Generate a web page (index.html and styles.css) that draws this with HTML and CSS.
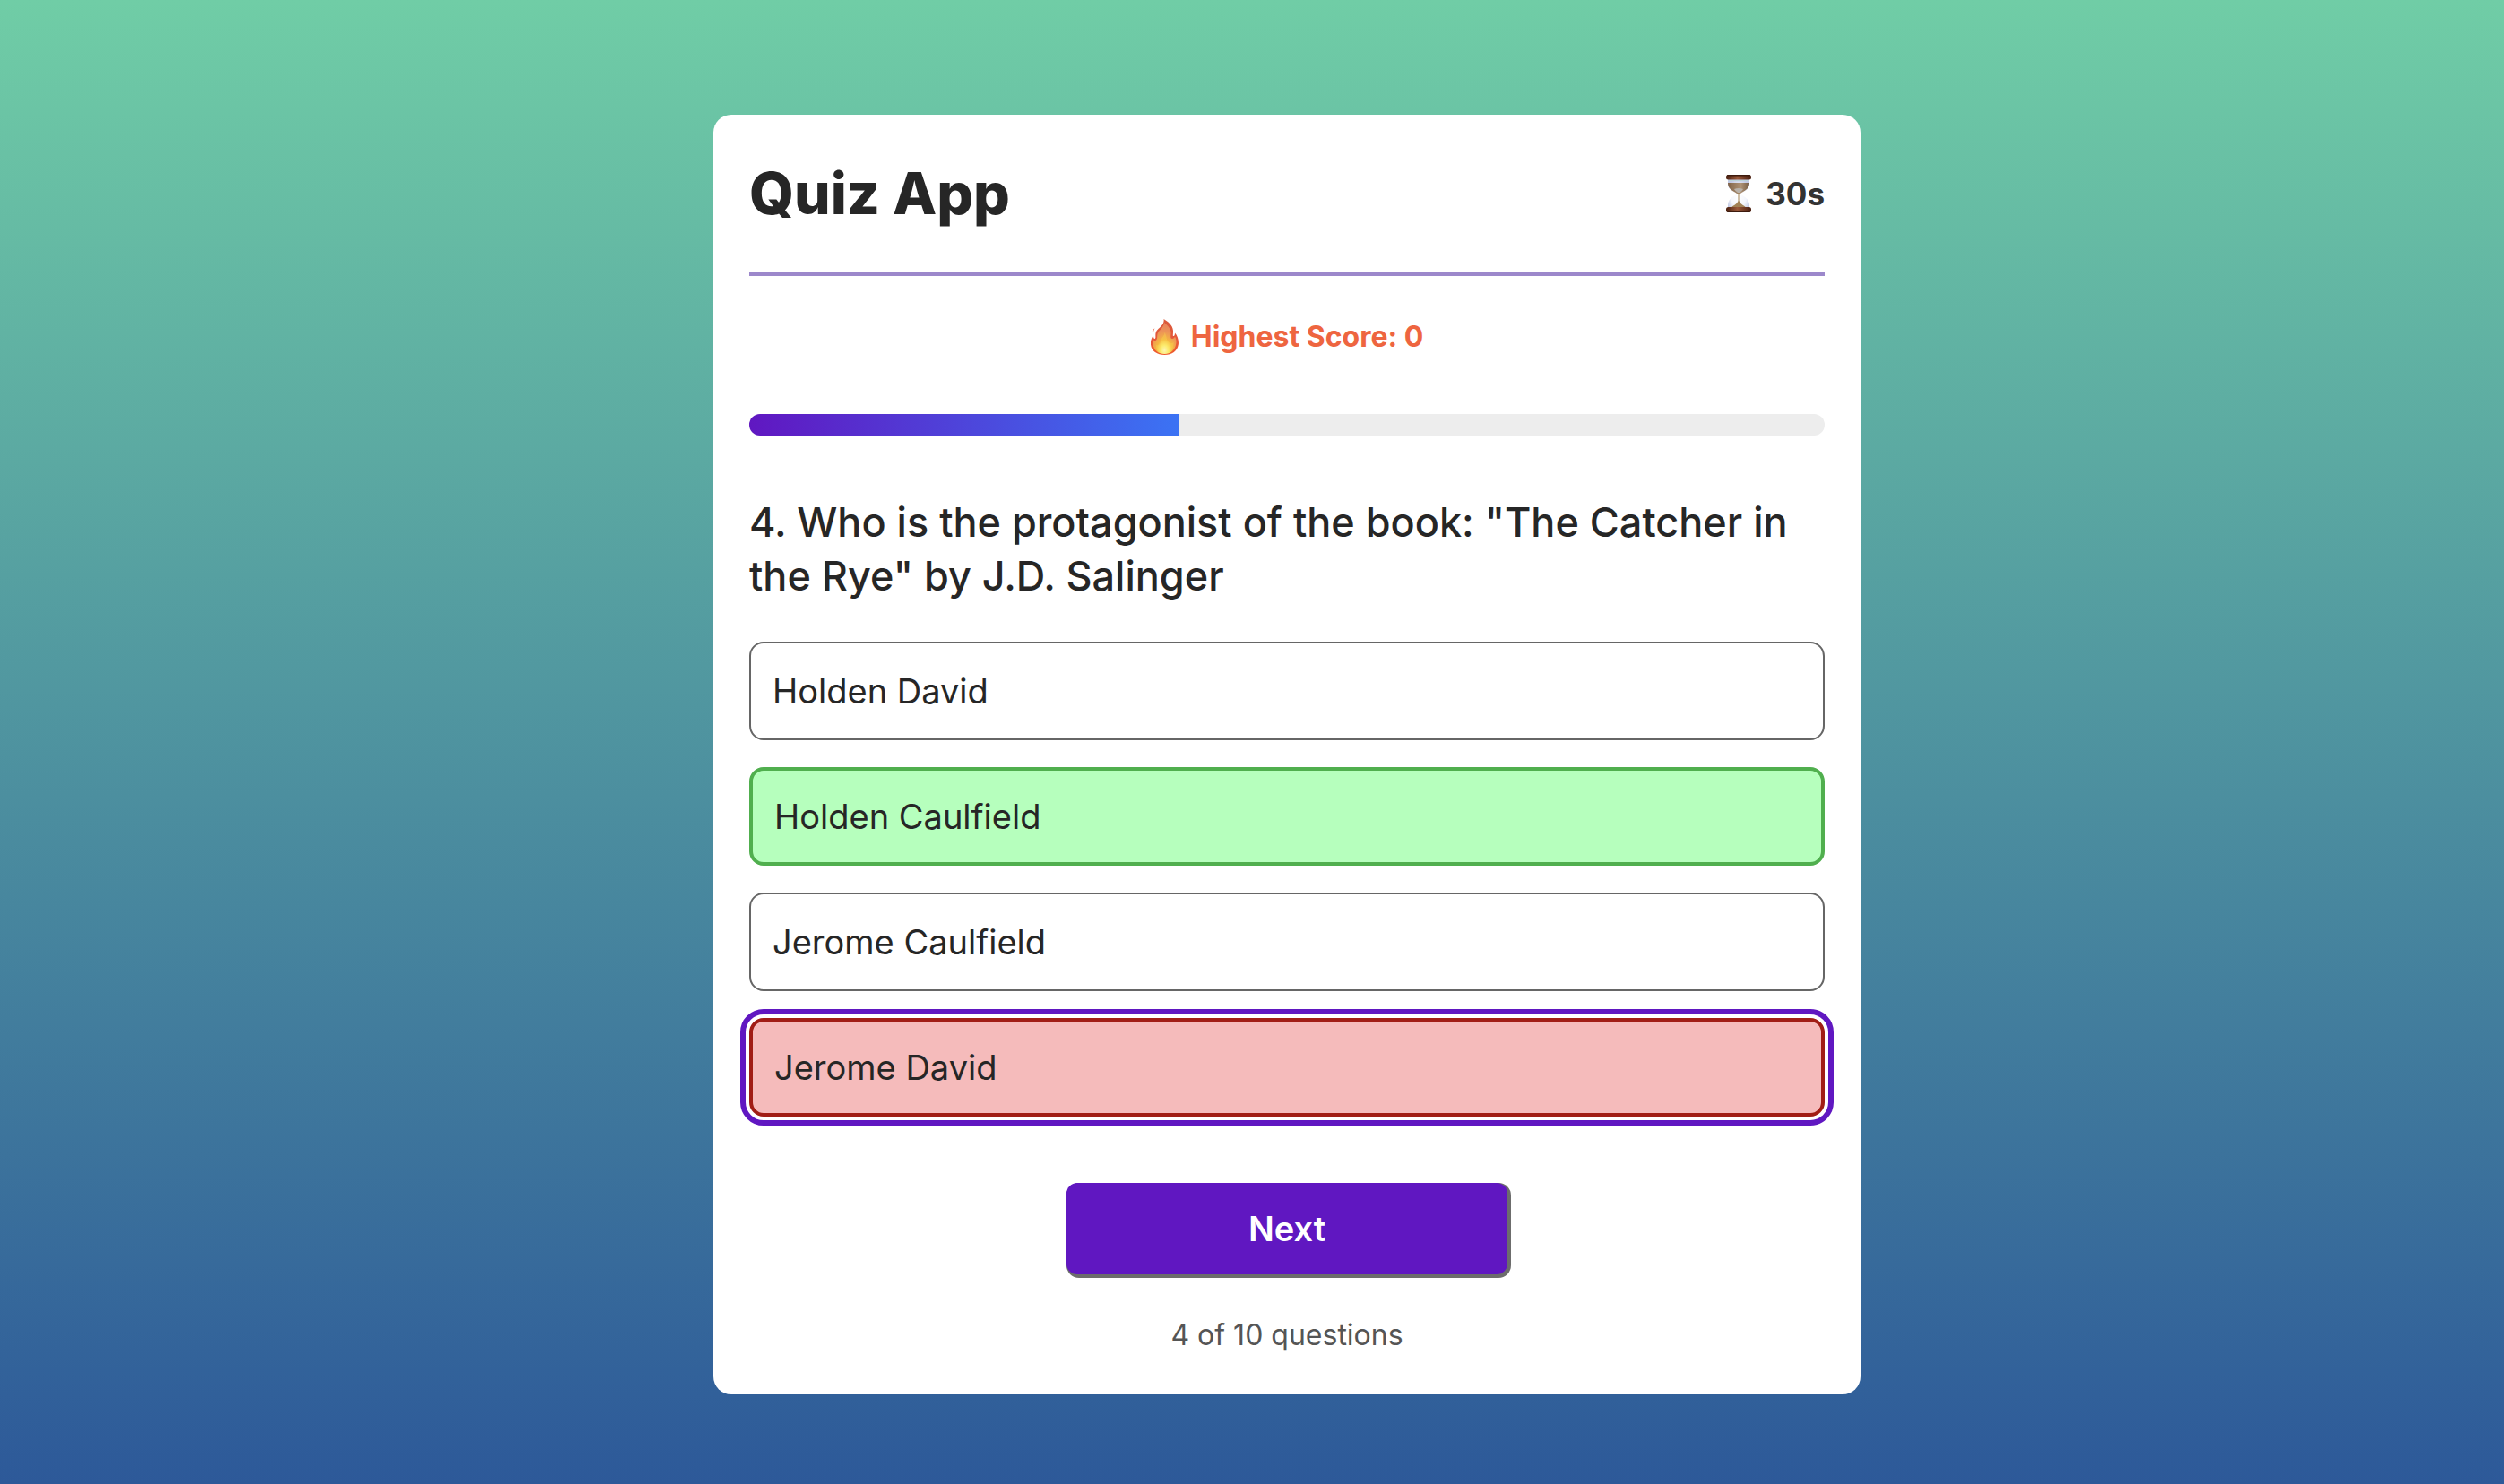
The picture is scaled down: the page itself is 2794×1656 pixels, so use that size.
FILE: index.html
```html
<!DOCTYPE html>
<html lang="en">
<head>
<meta charset="utf-8">
<meta name="viewport" content="width=device-width, initial-scale=1">
<title>Quiz App</title>
<link rel="stylesheet" href="styles.css">
</head>
<body>
<main class="page">
  <section class="card">
    <header class="header">
      <h1 class="title">Quiz App</h1>
      <div class="timer">
        <svg class="timer-icon" viewBox="0 0 28 42" aria-hidden="true">
          <defs>
            <linearGradient id="wood" x1="0" x2="1" y1="0" y2="0">
              <stop offset="0" stop-color="#4a2010"/><stop offset=".45" stop-color="#99583a"/><stop offset="1" stop-color="#4a1f10"/>
            </linearGradient>
            <linearGradient id="sand" x1="0" x2="1" y1="0" y2="0">
              <stop offset="0" stop-color="#806247"/><stop offset=".6" stop-color="#ae9377"/><stop offset="1" stop-color="#755b42"/>
            </linearGradient>
            <radialGradient id="glass" cx=".5" cy=".6" r=".6">
              <stop offset="0" stop-color="#ffffff"/><stop offset=".6" stop-color="#f4f6fc"/><stop offset="1" stop-color="#c2cae4"/>
            </radialGradient>
          </defs>
          <path d="M2 5h24v5c0 6-5 9-10 11v1c5 2 10 6 10 12v3H2v-3c0-6 5-10 10-12v-1C7 19 2 16 2 10z" fill="url(#glass)"/>
          <path d="M2 9h24c0 6-4 8-7 10-2 1-3 2-4 3h-2c-1-1-2-2-4-3C6 17 2 15 2 9z" fill="url(#sand)"/>
          <path d="M9 16q5-2 10 0-1 2-4 4h-2q-3-2-4-4z" fill="#b9b2aa"/>
          <path d="M3 6.500h22" stroke="#b9d3d8" stroke-width="1"/>
          <path d="M13.500 20h1v9c1 4 6 5 8 8h-17c2-3 7-4 8-8z" fill="#a18155"/>
          <rect x="0" y="0" width="28" height="5.500" rx="2.500" fill="url(#wood)"/>
          <rect x="1" y="0" width="26" height="1.500" rx=".7" fill="#3d1a0d"/>
          <rect x="0" y="36" width="28" height="6" rx="2.500" fill="url(#wood)"/>
          <rect x="1" y="40" width="26" height="2" rx="1" fill="#3d1a0d"/>
        </svg>
        <span>30s</span>
      </div>
    </header>

    <p class="score">
      <svg class="score-icon" viewBox="0 0 31 40" aria-hidden="true">
        <defs>
          <linearGradient id="flame" x1="0" x2="0" y1="0" y2="1">
            <stop offset="0" stop-color="#d95a3b"/><stop offset=".55" stop-color="#e5573a"/><stop offset="1" stop-color="#ef5a2c"/>
          </linearGradient>
          <radialGradient id="glow" cx=".5" cy=".88" r=".8">
            <stop offset="0" stop-color="#fffee0"/><stop offset=".2" stop-color="#fdf07a"/><stop offset=".42" stop-color="#f5b742"/><stop offset=".75" stop-color="#ec9358"/><stop offset="1" stop-color="#e98558"/>
          </radialGradient>
        </defs>
        <path d="M14.500 0c5 3 10 7 10.500 13 .2 3-.5 5 0 6 1.500.4 2-1.500 2-3.500 3 3 4.500 9 3.800 13-1 7-7 11.500-15.300 11.500S.8 36 0 28.500C-.4 24 1 21 3 18c0 3 .5 4 1.500 4 1.500-.5.500-3 1-6 .7-4 3.500-5 6-8 2.500-2.500 3.500-5 3-8z" fill="url(#flame)"/>
        <path d="M15 4c4 3 7.500 7 7.500 11 0 4-1 7 1.500 7 1.500 0 2.500-1 3-2.500 1.500 3 2 6 1 9.500C26.500 35 22 39 15.500 39S3.500 35 2.500 28.500C2 26 2 24 2.500 22.500c1 2 2.500 2 3.500 1 2-2 .5-5 2-8 1.500-3.500 6.500-5.500 7-11.500z" fill="url(#glow)"/>
        <path d="M15.500 15c3 4 1 8 5 11 2 1.500 4 1 5 0 0 6-1 11-10 12.500C8 37.500 5.500 34 6 29c3 1 5-1 5-4 0-4 4-5 4.500-10z" fill="#fbe24f" opacity=".3"/>
        <path d="M4.500 10.500c-3 1.500-3 4-2 5 1-1.500.5-3 2-5z" fill="#ea7358"/>
      </svg>
      <span>Highest Score: 0</span>
    </p>

    <div class="progress" role="progressbar" aria-label="Quiz progress" aria-valuemin="0" aria-valuemax="10" aria-valuenow="4">
      <div class="progress-fill" style="width: 40%"></div>
    </div>

    <h2 class="question">4. Who is the protagonist of the book: "The Catcher in the Rye" by J.D. Salinger</h2>

    <div class="options">
      <button class="option" type="button">Holden David</button>
      <button class="option option-correct" type="button">Holden Caulfield</button>
      <button class="option" type="button">Jerome Caulfield</button>
      <button class="option option-wrong option-selected" type="button">Jerome David</button>
    </div>

    <button class="next" type="button">Next</button>
    <p class="count">4 of 10 questions</p>
  </section>
</main>
</body>
</html>
```
FILE: styles.css
```css
* {
  box-sizing: border-box;
  margin: 0;
}

body {
  min-height: 100vh;
  background: linear-gradient(#70cda6, #2d5999);
  color: #262626;
  font-family: Inter, "Open Sans", sans-serif;
}

button {
  font-family: inherit;
  color: inherit;
  cursor: pointer;
}

.page {
  min-height: 100vh;
  padding: 128px 0 100px 78px;
}

.card {
  max-width: 1280px;
  margin: 0 auto;
  padding: 40px 40px 42px;
  background: #fff;
  border-radius: 20px;
}

.header {
  display: flex;
  align-items: center;
  justify-content: space-between;
  padding-bottom: 40px;
  border-bottom: 4px solid #9c88cb;
}

.title {
  font-size: 64px;
  font-weight: 800;
  line-height: 96px;
}

.timer {
  display: flex;
  align-items: center;
  gap: 16px;
  color: #333;
  font-size: 35px;
  font-weight: 700;
  line-height: 48px;
}

.timer-icon {
  width: 28px;
  height: 42px;
}

.score {
  display: flex;
  align-items: center;
  justify-content: center;
  gap: 14px;
  padding: 44px 0 62px;
  color: #ee6540;
  font-size: 32px;
  font-weight: 700;
  line-height: 48px;
}

.score-icon {
  width: 31px;
  height: 40px;
}

.progress {
  height: 24px;
  overflow: hidden;
  background: #ededed;
  border-radius: 12px;
}

.progress-fill {
  height: 100%;
  background: linear-gradient(90deg, #6017c1, #3b73f4);
}

.question {
  margin: 67px 0 43px;
  font-size: 45px;
  font-weight: 500;
  line-height: 60px;
}

.options {
  display: flex;
  flex-direction: column;
  gap: 30px;
}

.option {
  min-height: 110px;
  padding: 20px 24px;
  background: #fff;
  border: 2px solid #666;
  border-radius: 16px;
  font-size: 38px;
  line-height: 48px;
  text-align: left;
}

.option-correct {
  background: #b6ffbd;
  border: 4px solid #50af4e;
}

.option-wrong {
  background: #f5bbbb;
  border: 4px solid #a11d15;
}

.option-selected {
  outline: 6px solid #6017c1;
  outline-offset: 4px;
}

.next {
  display: block;
  width: 41%;
  min-height: 102px;
  margin: 74px auto 44px;
  background: #6017c1;
  border: 0;
  border-radius: 12px;
  box-shadow: 2px 2px 0 2px #6c6c6c;
  color: #fff;
  font-size: 38px;
  font-weight: 600;
  line-height: 48px;
}

.count {
  color: #555;
  font-size: 32px;
  line-height: 48px;
  text-align: center;
}
```
